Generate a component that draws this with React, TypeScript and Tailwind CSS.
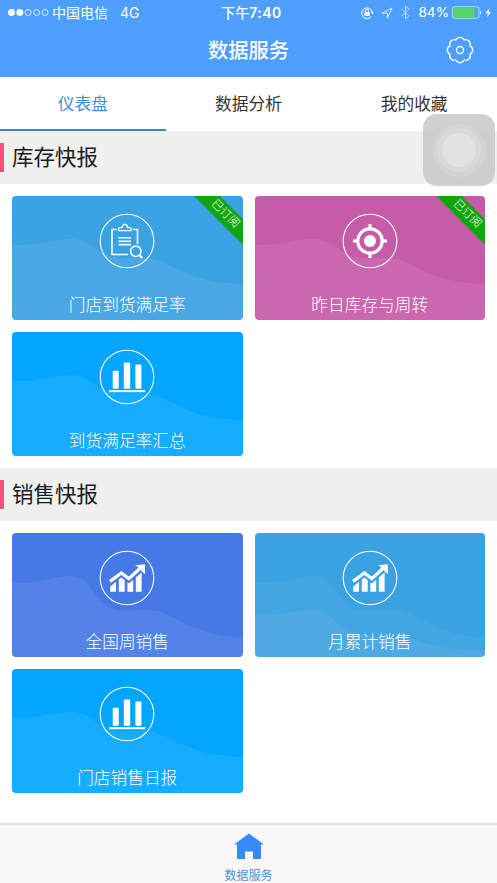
import { useState } from "react";
import type { ReactNode } from "react";

type WaveKind = "soft" | "steep" | "double";

type Report = {
  id: string;
  title: string;
  color: string;
  wave: WaveKind;
  icon: ReactNode;
  subscribed?: boolean;
};

const TABS = ["仪表盘", "数据分析", "我的收藏"];

const SOFT_WAVE =
  "M0 48C18 52 38 43 58 43C74 43 80 51 90 57C108 67 126 59 142 63C162 68 178 87 231 88V124H0Z";
const STEEP_WAVE =
  "M0 49C22 53 40 43 60 43C78 43 82 66 96 74C109 81 128 75 146 78C166 83 182 102 231 105V124H0Z";
const LOW_WAVE = "M0 82C22 84 42 77 60 77C78 78 82 96 98 100C120 107 142 102 160 107C184 115 204 117 231 118V124H0Z";

function Wave({ kind }: { kind: WaveKind }) {
  return (
    <svg className="absolute inset-0 h-full w-full" viewBox="0 0 231 124" preserveAspectRatio="none" fill="#fff">
      <path d={kind === "soft" ? SOFT_WAVE : STEEP_WAVE} fillOpacity={kind === "double" ? 0.05 : 0.08} />
      {kind === "double" ? <path d={LOW_WAVE} fillOpacity={0.06} /> : null}
    </svg>
  );
}

const clipboardIcon = (
  <g fill="none" stroke="currentColor" strokeWidth="1.6">
    <path d="M17.5 16.5H13V41.5H29" />
    <path d="M34 16.5H38.5V31" />
    <path d="M19.5 17.6V15.6Q19.5 14.6 21 14.6H23.2Q23.3 11.4 25.8 11.4Q28.3 11.4 28.4 14.6H30.6Q32 14.6 32 15.6V17.6Z" strokeWidth="1.3" />
    <path d="M19.5 24.8H32M19.5 28.2H32M19.5 31.6H32" />
    <circle cx="36.8" cy="38.3" r="5.2" />
    <path d="M40.4 42L43.2 45" strokeWidth="2" />
  </g>
);

const targetIcon = (
  <g>
    <circle cx="28" cy="28" r="12.2" fill="none" stroke="currentColor" strokeWidth="3.2" />
    <circle cx="28" cy="28" r="6" fill="currentColor" />
    <path d="M28 11V16M28 40V45M11 28H16M40 28H45" stroke="currentColor" strokeWidth="3" />
  </g>
);

const barsIcon = (
  <g fill="currentColor">
    <rect x="13.7" y="21.8" width="6" height="18" rx="1" />
    <rect x="24.8" y="13.4" width="6.4" height="26.4" rx="1" />
    <rect x="36.4" y="15.4" width="6" height="24.4" rx="1" />
    <rect x="10" y="41.2" width="36.2" height="2" />
  </g>
);

const trendIcon = (
  <g fill="currentColor">
    <path d="M11.3 36.4L17 31.8V41.8H11.3Z" />
    <path d="M19.8 29.6L22.4 27.6L25.7 30.2V41.8H19.8Z" />
    <path d="M28.4 32.4L30 33.2L34.2 30V41.8H28.4Z" />
    <path d="M36.8 27.5L42.6 22.6V41.8H36.8Z" />
    <path d="M11 31.4L22.4 23L29.8 28.6L42 17.5" fill="none" stroke="currentColor" strokeWidth="3.2" />
    <path d="M36.2 15.2L46 14.2V24.2L42.8 21.5L40.5 18.2Z" />
  </g>
);

const SECTIONS: { title: string; reports: Report[] }[] = [
  {
    title: "库存快报",
    reports: [
      { id: "arrival", title: "门店到货满足率", color: "bg-[#3aa1e2]", wave: "soft", icon: clipboardIcon, subscribed: true },
      { id: "turnover", title: "昨日库存与周转", color: "bg-[#c65ba9]", wave: "soft", icon: targetIcon, subscribed: true },
      { id: "arrival-total", title: "到货满足率汇总", color: "bg-[#03a5ff]", wave: "soft", icon: barsIcon },
    ],
  },
  {
    title: "销售快报",
    reports: [
      { id: "weekly", title: "全国周销售", color: "bg-[#4579e5]", wave: "steep", icon: trendIcon },
      { id: "monthly", title: "月累计销售", color: "bg-[#3aa1e2]", wave: "double", icon: trendIcon },
      { id: "daily", title: "门店销售日报", color: "bg-[#03a5ff]", wave: "soft", icon: barsIcon },
    ],
  },
];

function ReportCard({ report }: { report: Report }) {
  return (
    <button
      type="button"
      className={`relative flex h-[124px] flex-col items-center overflow-hidden rounded-[4px] pt-[17.5px] text-white ${report.color}`}
    >
      <Wave kind={report.wave} />
      <svg className="relative h-14 w-14 shrink-0" viewBox="0 0 56 56">
        <circle cx="28" cy="28" r="26.8" fill="none" stroke="currentColor" strokeWidth="1.1" />
        {report.icon}
      </svg>
      <span className="relative mt-[23.5px] text-[16.7px] leading-6 font-light">{report.title}</span>
      {report.subscribed ? (
        <span className="absolute top-[9px] -right-[24px] flex h-[18px] w-[84px] rotate-45 items-center justify-center bg-[#11a60b] text-[11.5px] leading-none font-light">
          已订阅
        </span>
      ) : null}
    </button>
  );
}

function StatusBar() {
  return (
    <div className="grid h-[25px] grid-cols-3 items-center pr-[5px] pl-[7px] text-[14px] leading-none">
      <div className="flex items-center">
        <svg className="mr-[3px] h-[9px] w-[42px]" viewBox="0 0 42 9" fill="none" stroke="currentColor" strokeWidth="0.8">
          <circle cx="4.5" cy="4.5" r="3.2" fill="currentColor" />
          <circle cx="12.8" cy="4.5" r="3.2" fill="currentColor" />
          <circle cx="21.2" cy="4.5" r="3" />
          <circle cx="29.6" cy="4.5" r="3" />
          <circle cx="38" cy="4.5" r="3" />
        </svg>
        <span>中国电信</span>
        <span className="ml-3">4G</span>
      </div>
      <div className="flex justify-center pl-1 font-medium">
        <span>下午</span>
        <span className="font-semibold tracking-[0.5px]">7:40</span>
      </div>
      <div className="flex items-center justify-end">
        <svg className="mr-[7px] h-[14px] w-[14px]" viewBox="0 0 14 14" fill="none" stroke="currentColor">
          <path d="M11.3 10.6A5.4 5.4 0 1 1 12.4 6.4" />
          <path d="M10.8 6.2H14L12.4 8.5Z" fill="currentColor" stroke="none" />
          <rect x="4.4" y="6.2" width="5.2" height="3.8" fill="currentColor" stroke="none" />
          <path d="M5.4 6.4V5A1.6 1.6 0 0 1 8.6 5V6.4" />
        </svg>
        <svg className="mr-2 h-3 w-3" viewBox="0 0 12 12" fill="none" stroke="currentColor" strokeWidth="0.8">
          <path d="M1 6.2L11 1L6.3 11.2V6.2Z" />
        </svg>
        <svg className="mr-2 h-[15px] w-[9px] opacity-60" viewBox="0 0 9 15" fill="none" stroke="currentColor">
          <path d="M.8 4L8 11L4.5 14V1L8 4L.8 11" />
        </svg>
        <span className="mr-[3px] text-[13.6px]">84%</span>
        <svg className="h-[13px] w-[40px]" viewBox="0 0 40 13">
          <rect x=".5" y=".7" width="26.5" height="11.6" rx="2" fill="none" stroke="currentColor" strokeOpacity=".75" strokeWidth=".8" />
          <rect x="1.5" y="1.7" width="21" height="9.6" rx="1" fill="#53d769" />
          <path d="M28 4.5Q30 6.5 28 8.5Z" fill="currentColor" />
          <path d="M37.5 2L33.5 7.2H36L35 11.3L39 5.9H36.5Z" fill="currentColor" />
        </svg>
      </div>
    </div>
  );
}

// Eight rounded lobes around a small hub
function SettingsIcon() {
  return (
    <svg className="h-7 w-7" viewBox="0 0 28 28" fill="none" stroke="currentColor" strokeWidth="1.3" strokeLinejoin="round">
      <path d="M9.87 4.02A4.5 4.5 0 0 1 18.13 4.02A4.5 4.5 0 0 1 23.98 9.87A4.5 4.5 0 0 1 23.98 18.13A4.5 4.5 0 0 1 18.13 23.98A4.5 4.5 0 0 1 9.87 23.98A4.5 4.5 0 0 1 4.02 18.13A4.5 4.5 0 0 1 4.02 9.87A4.5 4.5 0 0 1 9.87 4.02Z" />
      <circle cx="14" cy="14" r="3.5" />
    </svg>
  );
}

export default function App() {
  const [activeTab, setActiveTab] = useState(TABS[0]);

  return (
    <div className="relative flex h-[883px] w-full flex-col overflow-hidden bg-white font-['Inter','Noto_Sans_CJK_SC',sans-serif]">
      <header className="h-[77px] shrink-0 bg-[#4d9efd] text-white">
        <StatusBar />
        <div className="grid h-[49px] grid-cols-[1fr_auto_1fr] items-center pr-[23px]">
          <h1 className="col-start-2 pt-[3px] pl-[23px] text-[20.3px] leading-none font-medium">数据服务</h1>
          <button type="button" className="justify-self-end" aria-label="设置">
            <SettingsIcon />
          </button>
        </div>
      </header>

      <nav className="grid h-[54px] shrink-0 grid-cols-3">
        {TABS.map((tab) => (
          <button
            key={tab}
            type="button"
            className={`border-b-2 pt-1 text-[16.7px] ${
              tab === activeTab ? "border-[#2f88d8] text-[#3c8fd8]" : "border-transparent text-[#333]"
            }`}
            onClick={() => setActiveTab(tab)}
          >
            {tab}
          </button>
        ))}
      </nav>

      <main className="flex-1">
        {SECTIONS.map((section) => (
          <section key={section.title}>
            <div className="flex h-[52.5px] items-center bg-[#f0f0f0]">
              <span className="h-[29px] w-1 bg-[#fb4f7d]" />
              <h2 className="ml-2 pt-px text-[21.5px] leading-none text-[#1a1a1a]">{section.title}</h2>
            </div>
            <div className="grid grid-cols-2 gap-3 px-3 pt-3 pb-[12.5px]">
              {section.reports.map((report) => (
                <ReportCard key={report.id} report={report} />
              ))}
            </div>
          </section>
        ))}
      </main>

      <footer className="flex h-[60px] shrink-0 flex-col items-center border-t-2 border-[#e2e2e2] bg-[#f8f8f8] pt-2 text-[#368af5]">
        <svg className="h-[27px] w-[30px] shrink-0" viewBox="0 0 30 27" fill="currentColor">
          <path d="M15 .5L0 11.5H3V25Q3 26 4 26H11V18.5H19V26H26Q27 26 27 25V11.5H30Z" />
        </svg>
        <span className="mt-[7px] text-[12px] leading-[18px] text-[#4a93dd]">数据服务</span>
      </footer>

      <div className="absolute top-[114px] right-[2px] flex h-[72px] w-[72px] items-center justify-center rounded-[14px] bg-[#c8c8c8]/85">
        <div className="flex h-[53px] w-[53px] items-center justify-center rounded-full bg-white/10">
          <div className="flex h-[44px] w-[44px] items-center justify-center rounded-full bg-white/15">
            <div className="h-[34px] w-[34px] rounded-full bg-white/25" />
          </div>
        </div>
      </div>
    </div>
  );
}
